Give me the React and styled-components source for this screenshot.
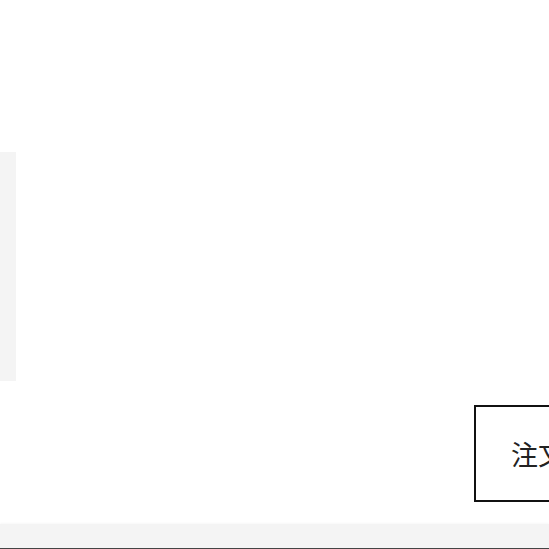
import React from 'react'
import styled, { createGlobalStyle } from 'styled-components'

const Global = createGlobalStyle`
    html, body {
        margin: 0;
        padding: 0;
        background: #ffffff;
        font-family: "Noto Sans CJK JP", "Noto Sans", sans-serif;
    }
`;

function App() {
    return (
        <Page>
            <Global />
            <Main>
                <SidePanel />
                <Actions>
                    <OrderButton>注文する</OrderButton>
                </Actions>
            </Main>
            <Footer />
        </Page>
    )
}

export default App;

const Page = styled.div`
    width: 549px;
    height: 549px;
    overflow: hidden;
    display: flex;
    flex-direction: column;
`;

const Main = styled.div`
    flex: 1;
    display: flex;
    flex-direction: column;
    padding-top: 152px;
`;

const SidePanel = styled.div`
    width: 16px;
    height: 229px;
    background-color: #f4f4f4;
`;

const Actions = styled.div`
    display: flex;
    margin-top: 24px;
    padding-left: 474px;
`;

const OrderButton = styled.div`
    flex-shrink: 0;
    box-sizing: border-box;
    width: 220px;
    height: 97px;
    border: 2px solid #111;
    display: flex;
    align-items: center;
    padding-left: 35px;
    font-size: 27px;
    color: #222;
    white-space: nowrap;
`;

const Footer = styled.div`
    height: 24px;
    background-color: #f4f4f4;
    border-bottom: 1px solid #444;
    box-shadow: 0 -1px 2px rgba(0,0,0,0.03);
`;
